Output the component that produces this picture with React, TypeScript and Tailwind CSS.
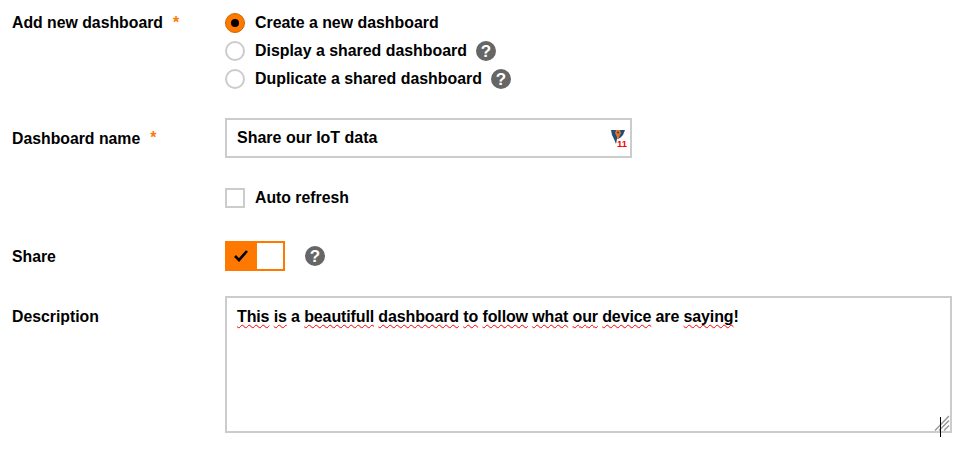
import { ReactNode } from "react";

function Help() {
  return (
    <span className="flex h-5 w-5 items-center justify-center rounded-full bg-[#666] text-[17px] font-bold leading-none text-white">
      ?
    </span>
  );
}

function Radio({ checked }: { checked?: boolean }) {
  return checked ? (
    <span className="flex h-5 w-5 items-center justify-center rounded-full border border-[#c96a00] bg-[#ff7900]">
      <span className="h-2 w-2 rounded-full bg-black" />
    </span>
  ) : (
    <span className="h-5 w-5 rounded-full border-2 border-[#ccc] bg-white" />
  );
}

function Option({ label, checked, help }: { label: string; checked?: boolean; help?: boolean }) {
  return (
    <div className="flex h-7 items-center">
      <Radio checked={checked} />
      <span className="ml-2.5 text-[15.9px]">{label}</span>
      {help && (
        <span className="ml-[9px]">
          <Help />
        </span>
      )}
    </div>
  );
}

function Label({ children, required }: { children: ReactNode; required?: boolean }) {
  return (
    <div className="w-[225px] shrink-0 pl-3 text-[15.8px]">
      {children}
      {required && <span className="ml-2.5 text-[#ff7900]">*</span>}
    </div>
  );
}

function Spell({ children }: { children: ReactNode }) {
  return (
    <span className="underline decoration-[#ff0000] decoration-wavy decoration-[1.35px] underline-offset-2 [text-decoration-skip-ink:none]">
      {children}
    </span>
  );
}

export default function App() {
  return (
    <div className="h-[455px] w-[978px] overflow-hidden bg-white font-['Liberation_Sans',sans-serif] text-[16px] font-bold text-black">
      <div className="flex pt-[9px]">
        <Label required>
          <span className="leading-7">Add new dashboard</span>
        </Label>
        <div>
          <Option label="Create a new dashboard" checked />
          <Option label="Display a shared dashboard" help />
          <Option label="Duplicate a shared dashboard" help />
        </div>
      </div>

      <div className="mt-[25px] flex items-center">
        <Label required>
          <span className="relative top-px">Dashboard name</span>
        </Label>
        <div className="relative flex h-10 w-[407px] items-center border-2 border-[#ccc] pl-2.5">
          Share our IoT data
          <svg className="absolute right-[3px] top-2.5" width="16" height="18" viewBox="0 0 16 18">
            <path d="M0 0h14l-2 5-3 3-3 1-1 5-2-5-2-4z" fill="#1f4e79" />
            <path d="M5 0h4l1 3-2 4v2H6V7L4 3z" fill="#e8702a" />
            <circle cx="7" cy="2.5" r="1" fill="#1f4e79" />
            <text x="6" y="17" fontSize="9.5" fontFamily="Liberation Sans, sans-serif" fontWeight="700" fill="#f00">
              11
            </text>
          </svg>
        </div>
      </div>

      <div className="ml-[225px] mt-[30px] flex h-5 items-center">
        <span className="h-5 w-5 border-2 border-[#ccc] bg-white" />
        <span className="ml-2.5 text-[15.8px]">Auto refresh</span>
      </div>

      <div className="mt-[33px] flex items-center">
        <Label>
          <span className="relative top-px">Share</span>
        </Label>
        <div className="flex h-[30px] w-[60px] border-2 border-[#ff7900]">
          <span className="flex w-[30px] items-center justify-center bg-[#ff7900] pb-0.5 pr-[3px]">
            <svg width="16" height="13" viewBox="0 0 16 13">
              <path d="M2 7l4 4 8-9" fill="none" stroke="#000" strokeWidth="2.6" />
            </svg>
          </span>
          <span className="flex-1 bg-white" />
        </div>
        <span className="ml-5">
          <Help />
        </span>
      </div>

      <div className="mt-[25px] flex">
        <Label>
          <div className="pt-[9px]">Description</div>
        </Label>
        <div className="relative h-[137px] w-[727px] border-2 border-[#ccc] px-2.5 pt-[7px] tracking-[-0.13px]">
          <Spell>This</Spell> <Spell>is</Spell> a <Spell>beautifull</Spell> <Spell>dashboard</Spell> <Spell>to</Spell>{" "}
          <Spell>follow</Spell> <Spell>what</Spell> <Spell>our</Spell> <Spell>device</Spell> are <Spell>saying</Spell>!
          <svg className="absolute bottom-[-6px] right-0" width="16" height="22" viewBox="0 0 16 22">
            <path d="M1 15.5L15 1M5 15.5L15 5.5M10 15.5l5-5" stroke="#999" strokeWidth="1.5" fill="none" />
            <path d="M6.5 2v20" stroke="#000" strokeWidth="1" />
          </svg>
        </div>
      </div>
    </div>
  );
}
